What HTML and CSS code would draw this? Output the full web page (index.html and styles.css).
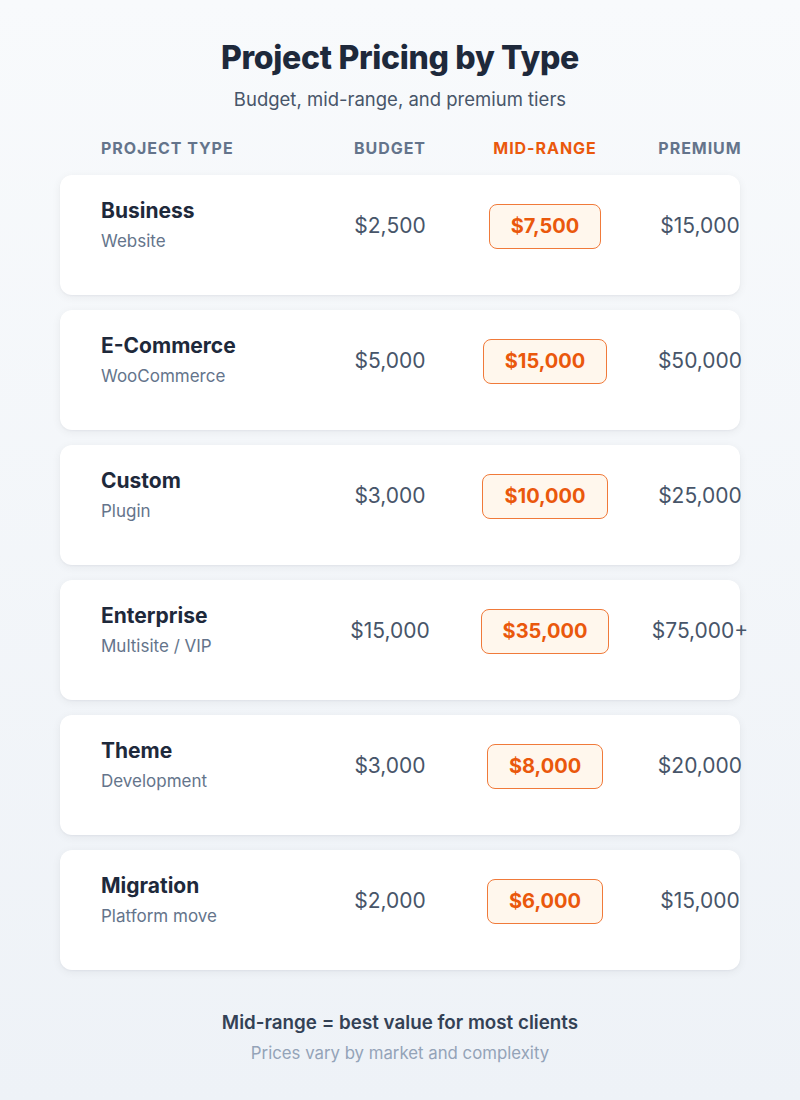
FILE: index.html
```html
<!DOCTYPE html>
<html lang="en">
<head>
<meta charset="utf-8">
<title>Project Pricing by Type</title>
<link rel="stylesheet" href="styles.css">
</head>
<body>
<main class="page">
  <header class="intro">
    <h1 class="title">Project Pricing by Type</h1>
    <p class="subtitle">Budget, mid-range, and premium tiers</p>
  </header>

  <div class="table">
    <div class="row head">
      <div class="col-type">Project Type</div>
      <div class="col">Budget</div>
      <div class="col mid-head">Mid-Range</div>
      <div class="col">Premium</div>
    </div>

    <div class="row card">
      <div class="col-type"><div class="name">Business</div><div class="sub">Website</div></div>
      <div class="col price">$2,500</div>
      <div class="col"><span class="badge">$7,500</span></div>
      <div class="col price">$15,000</div>
    </div>

    <div class="row card">
      <div class="col-type"><div class="name">E-Commerce</div><div class="sub">WooCommerce</div></div>
      <div class="col price">$5,000</div>
      <div class="col"><span class="badge">$15,000</span></div>
      <div class="col price">$50,000</div>
    </div>

    <div class="row card">
      <div class="col-type"><div class="name">Custom</div><div class="sub">Plugin</div></div>
      <div class="col price">$3,000</div>
      <div class="col"><span class="badge">$10,000</span></div>
      <div class="col price">$25,000</div>
    </div>

    <div class="row card">
      <div class="col-type"><div class="name">Enterprise</div><div class="sub">Multisite / VIP</div></div>
      <div class="col price">$15,000</div>
      <div class="col"><span class="badge">$35,000</span></div>
      <div class="col price">$75,000+</div>
    </div>

    <div class="row card">
      <div class="col-type"><div class="name">Theme</div><div class="sub">Development</div></div>
      <div class="col price">$3,000</div>
      <div class="col"><span class="badge">$8,000</span></div>
      <div class="col price">$20,000</div>
    </div>

    <div class="row card">
      <div class="col-type"><div class="name">Migration</div><div class="sub">Platform move</div></div>
      <div class="col price">$2,000</div>
      <div class="col"><span class="badge">$6,000</span></div>
      <div class="col price">$15,000</div>
    </div>
  </div>

  <footer class="notes">
    <p class="note-main">Mid-range = best value for most clients</p>
    <p class="note-sub">Prices vary by market and complexity</p>
  </footer>
</main>
</body>
</html>
```

FILE: styles.css
```css
* { box-sizing: border-box; }

html, body {
  margin: 0;
  padding: 0;
}

body {
  width: 800px;
  min-height: 1100px;
  font-family: Inter, "Noto Sans", "Liberation Sans", sans-serif;
  background: linear-gradient(180deg, #f8fafc 0%, #eef2f7 100%);
  color: #1e293b;
}

.page {
  padding-top: 38px;
}

.intro {
  text-align: center;
}

.title {
  margin: 0;
  font-size: 32px;
  line-height: 40px;
  font-weight: 800;
  color: #1e293b;
  letter-spacing: -0.3px;
}

.subtitle {
  margin: 9px 0 0;
  font-size: 18.5px;
  line-height: 24px;
  color: #475569;
}

.table {
  margin: 27px 60px 0;
  display: flex;
  flex-direction: column;
  gap: 15px;
}

.row {
  display: grid;
  grid-template-columns: 230px 120px 190px 120px;
  padding: 0 40px;
}

.col {
  display: flex;
  justify-content: center;
  white-space: nowrap;
}

.head {
  height: 20px;
  line-height: 20px;
  margin-bottom: 2px;
  font-size: 16px;
  font-weight: 700;
  text-transform: uppercase;
  color: #64748b;
  letter-spacing: 0.95px;
}

.mid-head { color: #ea580c; }

.card {
  height: 120px;
  padding-top: 24px;
  align-items: start;
  background: #ffffff;
  border-radius: 12px;
  box-shadow: 0 2px 10px rgba(15, 23, 42, 0.06), 0 1px 2px rgba(15, 23, 42, 0.04);
}

.card .col {
  height: 53px;
  align-items: center;
}

.card .col:has(.badge) {
  height: 54px;
}

.col-type { padding-left: 1px; }

.name {
  font-size: 21px;
  line-height: 24px;
  font-weight: 700;
  color: #1e293b;
}

.sub {
  margin-top: 8px;
  font-size: 17px;
  line-height: 20px;
  color: #64748b;
}

.price {
  font-size: 21px;
  color: #475569;
}

.badge {
  display: inline-flex;
  align-items: center;
  height: 45px;
  padding: 0 21px;
  border: 1.5px solid #f07a3a;
  border-radius: 8px;
  background: #fff7ed;
  color: #ea580c;
  font-size: 20px;
  font-weight: 700;
}

.notes {
  margin-top: 41px;
  text-align: center;
}

.note-main {
  margin: 0;
  font-size: 18.8px;
  line-height: 24px;
  font-weight: 600;
  color: #334155;
}

.note-sub {
  margin: 8px 0 0;
  font-size: 16.8px;
  line-height: 20px;
  color: #94a3b8;
}
```
